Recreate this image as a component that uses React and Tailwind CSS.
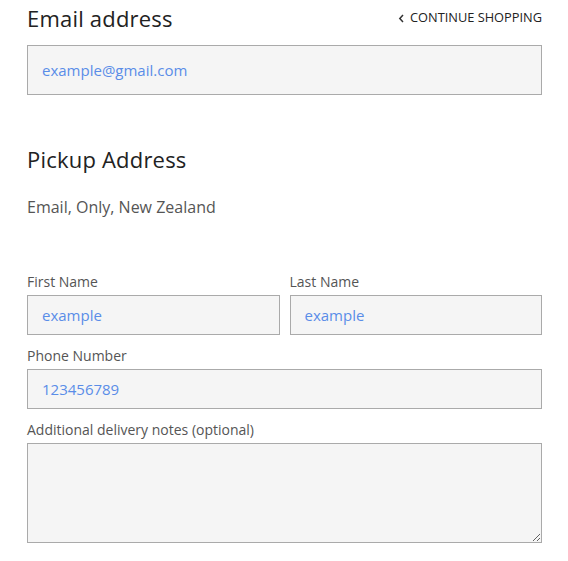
import React from "react";

const font = { fontFamily: '"Open Sans", "Liberation Sans", sans-serif' };

const Field = ({ label, value, className = "" }) => (
  <div className={className}>
    <label className="block text-[14px] leading-[20px] text-[#555]">{label}</label>
    <input
      readOnly
      value={value}
      className="mt-[3px] block w-full h-[40px] border border-[#aaa] bg-[#f5f5f5] px-[14px] text-[15px] text-[#5a8de8] outline-none"
    />
  </div>
);

export default function App() {
  return (
    <div className="min-h-screen bg-white pl-[27px] pr-[26px]" style={font}>
      <div className="flex items-center justify-between h-[36px]">
        <h2 className="text-[22px] leading-[36px] text-[#222] tracking-[0.2px]">Email address</h2>
        <a href="#" className="flex items-center gap-[5px] text-[12.8px] text-[#222] uppercase">
          <svg width="7" height="9" viewBox="0 0 7 9" fill="none" stroke="#333" strokeWidth="1.5">
            <path d="M5 1 L1.8 4.5 L5 8" />
          </svg>
          Continue shopping
        </a>
      </div>
      <input
        readOnly
        value="example@gmail.com"
        className="mt-[9px] block w-full h-[50px] border border-[#aaa] bg-[#f5f5f5] px-[14px] text-[15px] text-[#5a8de8] outline-none"
      />

      <h2 className="mt-[46px] text-[22px] leading-[36px] text-[#222] tracking-[0.2px]">Pickup Address</h2>
      <p className="mt-[18px] text-[16px] leading-[24px] text-[#555]">Email, Only, New Zealand</p>

      <div className="mt-[53px] grid grid-cols-2 gap-[10px]">
        <Field label="First Name" value="example" />
        <Field label="Last Name" value="example" />
      </div>
      <Field className="mt-[11px]" label="Phone Number" value="123456789" />
      <div className="mt-[11px]">
        <label className="block text-[14px] leading-[20px] text-[#555]">
          Additional delivery notes (optional)
        </label>
        <textarea className="mt-[3px] block w-full h-[100px] border border-[#aaa] bg-[#f5f5f5] px-[14px] py-[10px] text-[15px] text-[#5a8de8] outline-none" />
      </div>
    </div>
  );
}
